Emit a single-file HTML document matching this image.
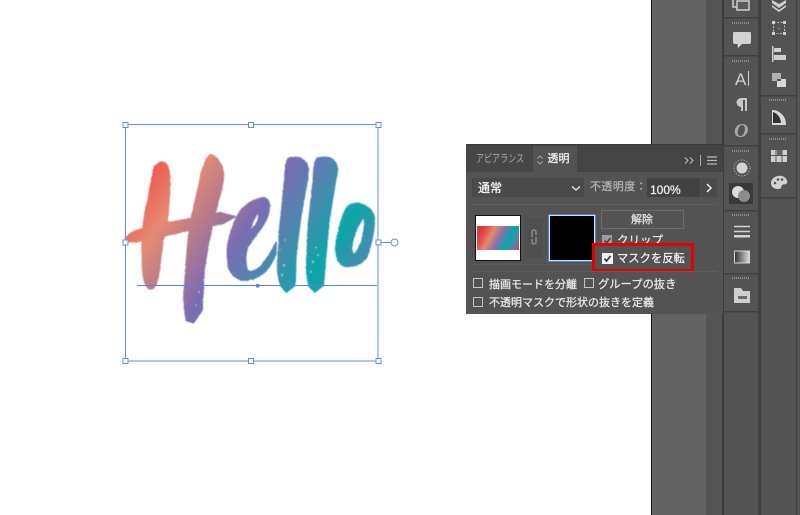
<!DOCTYPE html>
<html><head><meta charset="utf-8">
<style>
html,body{margin:0;padding:0;background:#fff}
#r{position:relative;width:800px;height:515px;overflow:hidden;background:#fff;font-family:"Liberation Sans","Noto Sans CJK JP",sans-serif}
.a{position:absolute}
.t{position:absolute;white-space:nowrap;color:#e9e9e9;font-size:11px;line-height:14px;-webkit-text-stroke:.25px currentColor}
.cb{position:absolute;width:8px;height:8px;border:1px solid #c4c4c4;box-sizing:content-box}
</style></head><body><div id="r">
<div class="a" style="left:651px;top:0;width:1px;height:515px;background:#1c1c1c"></div>
<div class="a" style="left:652px;top:0;width:54px;height:515px;background:#636363"></div>
<div class="a" style="left:706px;top:0;width:16px;height:515px;background:#555"></div>
<div class="a" style="left:722px;top:0;width:78px;height:515px;background:#535353"></div>
<div class="a" style="left:722px;top:0;width:2px;height:515px;background:#3d3d3d"></div>
<div class="a" style="left:758px;top:0;width:3px;height:515px;background:#414141"></div>
<div class="a" style="left:796px;top:0;width:1px;height:515px;background:#414141"></div>

<svg class="a" style="left:0;top:0" width="800" height="515" viewBox="0 0 800 515">
<defs>
<linearGradient id="g" gradientUnits="userSpaceOnUse" x1="155" y1="106" x2="745" y2="508">
<stop offset="0" stop-color="#ec5a4e"/><stop offset=".05" stop-color="#ea6455"/><stop offset=".18" stop-color="#e58a72"/><stop offset=".33" stop-color="#b47a8c"/><stop offset=".49" stop-color="#7b6cb2"/><stop offset=".69" stop-color="#3f8fae"/><stop offset=".83" stop-color="#0ba6a8"/><stop offset=".95" stop-color="#3f8fae"/>
</linearGradient>
<filter id="rough" x="-5%" y="-5%" width="110%" height="110%">
<feTurbulence type="fractalNoise" baseFrequency=".4" numOctaves="2" seed="4"/>
<feDisplacementMap in="SourceGraphic" scale="1.500" xChannelSelector="R" yChannelSelector="G"/>
<feGaussianBlur stdDeviation=".4"/>
</filter>
</defs>
<g filter="url(#rough)">
<g transform="translate(110 110) scale(.33333)" fill="url(#g)" stroke="url(#g)" stroke-width="5" stroke-linejoin="round" fill-rule="evenodd">
<path d="M150 157Q165 155 172 168Q180 190 179 220Q177 280 172 335L165 350Q158 400 152 440Q148 490 138 522Q125 545 112 532Q100 515 98 470Q95 400 101 340Q105 300 115 270Q125 200 135 170Z"/>
<path d="M47 385Q60 370 75 364L130 345L250 325L330 308L375 320L340 340L240 360L130 385L80 395L55 395Z"/>
<path d="M300 134Q318 138 328 155Q342 175 340 205Q335 240 325 270L310 335L295 400L282 480L276 600L250 638L230 630Q222 600 222 560L232 420Q238 350 250 300L275 190Q285 150 300 134Z"/>
<path d="M352 430Q352 400 362 370Q375 325 395 298Q425 268 462 263Q480 270 478 295Q474 325 455 352Q430 385 412 412Q402 450 412 482Q425 488 445 476Q470 455 498 398L497 430Q485 465 465 485Q435 512 395 510Q365 500 355 470ZM445 305Q428 325 420 362Q440 350 447 322Z"/>
<path d="M535 145Q550 140 570 144Q592 155 595 178L590 220L572 320L558 430L555 525L530 546L514 530Q503 500 503 470L510 350L525 200Q527 160 535 145Z"/>
<path d="M620 145Q640 140 660 144Q680 155 682 178L675 220L657 330L647 440L640 525L615 546L598 530Q590 500 590 470L595 350L610 210Q612 165 620 145Z"/>
<path d="M732 280Q755 280 772 292Q792 305 793 330Q792 375 772 438Q755 465 722 468Q695 475 682 445Q672 410 685 370Q695 320 710 295Q720 283 732 280ZM762 322Q740 345 727 395Q720 430 733 433Q748 420 757 385Q768 340 762 322Z"/>
</g>
<g fill="#fff" opacity=".75">
<circle cx="284" cy="265" r=".8"/><circle cx="280" cy="250" r=".7"/><circle cx="285" cy="240" r=".6"/><circle cx="282" cy="275" r=".7"/><circle cx="313" cy="262" r=".8"/><circle cx="316" cy="248" r=".7"/><circle cx="311" cy="272" r=".7"/><circle cx="318" cy="255" r=".6"/>
<circle cx="204" cy="280" r=".7"/><circle cx="199" cy="292" r=".7"/><circle cx="203" cy="300" r=".7"/><circle cx="196" cy="305" r=".6"/>
</g>
</g>
<rect x="137" y="285" width="240" height="1" fill="#4f80f5"/>
<g fill="none" stroke="#5f8cf5" stroke-width="1">
<rect x="125.500" y="124.500" width="252.500" height="236.500"/>
<path d="M378 242.500H391"/>
<circle cx="394.500" cy="242.500" r="3.500" fill="#fff"/>
<g fill="#fff">
<rect x="123" y="122.500" width="5" height="5"/><rect x="248.500" y="122.500" width="5" height="5"/><rect x="376" y="122.500" width="5" height="5"/>
<rect x="123" y="240" width="5" height="5"/><rect x="376" y="240" width="5" height="5"/>
<rect x="123" y="358.500" width="5" height="5"/><rect x="248.500" y="358.500" width="5" height="5"/><rect x="376" y="358.500" width="5" height="5"/>
</g></g>
<rect x="256" y="284" width="3.500" height="3.500" fill="#5b86f0"/>

<g fill="#3f3f3f">
<rect x="724" y="17" width="34" height="1.500"/><rect x="724" y="55" width="34" height="1.500"/><rect x="724" y="145" width="34" height="1.500"/><rect x="724" y="210" width="34" height="1.500"/><rect x="724" y="273" width="34" height="1.500"/><rect x="724" y="311" width="34" height="1.500"/>
<rect x="761" y="95" width="35" height="1.500"/><rect x="761" y="133" width="35" height="1.500"/><rect x="761" y="197" width="35" height="1.500"/>
</g>
<g stroke="#8c8c8c" stroke-width="2" stroke-dasharray="1 1">
<path d="M732 23H750M732 61H750M732 151H750M732 215H750M732 278H750M769 100H787M769 139H787"/>
</g>

<!-- col1 icons -->
<path d="M733 0V7H737M737 1H749V10H737Z" fill="#5a5a5a" stroke="#cfcfcf" stroke-width="1.500"/>
<path d="M734 32H750Q751 32 751 34V42Q751 44 749 44H742L738 48L737.500 44H735Q733 44 733 42V34Q733 32 734 32Z" fill="#d2d2d2"/>
<text x="735" y="85" font-family="Liberation Sans" font-size="17" fill="#d0d0d0">A</text>
<rect x="748" y="71" width="1" height="15" fill="#d0d0d0"/>
<path d="M745 98H741A4.500 4.500 0 0 0 741 107V111H743V100H745V111H747V98Z" fill="#c8c8c8"/>
<text x="734" y="137" font-family="Liberation Serif" font-style="italic" font-weight="bold" font-size="20" fill="#a8a8a8">O</text>
<circle cx="742" cy="168" r="5.500" fill="#d4d4d4"/><circle cx="742" cy="168" r="8" fill="none" stroke="#a8a8a8" stroke-dasharray="1.500 1.500"/>
<rect x="729" y="183" width="24" height="21" fill="#393939"/>
<circle cx="738" cy="192" r="6" fill="#dcdcdc"/><circle cx="744" cy="196" r="6" fill="#8c8c8c"/>
<path d="M734 226.500H750M734 231.500H750" stroke="#d4d4d4" stroke-width="1.500"/><rect x="734" y="235" width="16" height="2.500" fill="#d4d4d4"/>
<linearGradient id="g2"><stop offset="0" stop-color="#333"/><stop offset="1" stop-color="#ddd"/></linearGradient>
<rect x="734.500" y="251" width="15" height="12" fill="url(#g2)" stroke="#d4d4d4"/>
<path d="M734 288H741L743 291H750V303H734Z" fill="#cfcfcf"/><rect x="738" y="296" width="9" height="3" fill="#6b6b6b"/>

<!-- col2 icons -->
<path d="M772 0L779 4L786 0V3L779 8L772 3ZM772 5L779 10L786 5V7L779 12L772 7Z" fill="#d0d0d0"/>
<rect x="773.500" y="22.500" width="11" height="11" fill="none" stroke="#bbb" stroke-dasharray="2 1.500"/>
<path d="M772 21h3v3h-3zM783 21h3v3h-3zM772 32h3v3h-3zM783 32h3v3h-3z" fill="#d0d0d0"/><rect x="778.500" y="28" width="1" height="1" fill="#ccc"/>
<rect x="772" y="46" width="1.500" height="16" fill="#d0d0d0"/><rect x="774" y="48" width="7" height="4" fill="#d0d0d0"/><rect x="774" y="55" width="12" height="5" fill="#d0d0d0"/>
<rect x="772" y="73" width="9" height="8" fill="#b0b0b0"/><rect x="777" y="79" width="9" height="8" fill="#d8d8d8"/><rect x="777" y="79" width="4" height="2" fill="#555"/>
<path d="M772 110H773A14 14 0 0 1 786 124V125H772Z" fill="#d8d8d8"/><path d="M773 112A12 12 0 0 1 781 123H773Z" fill="#333"/>
<g fill="#cfcfcf"><rect x="771" y="150" width="16" height="12"/></g><path d="M771 155.500H787M776 150V162M782 150V162" stroke="#555"/><rect x="777" y="150" width="5" height="5" fill="#666"/>
<path d="M771 183C771 178 777 175 782 176C786 177 788 181 787 183C786 185 783 184 782 185C781 187 782 189 778 189C774 189 771 187 771 183Z" fill="#d2d2d2"/>
<circle cx="775" cy="183" r="1.300" fill="#555"/><circle cx="778" cy="179.500" r="1.300" fill="#555"/><circle cx="782" cy="179.500" r="1.300" fill="#555"/>
</svg>

<!-- panel -->
<div class="a" style="left:466px;top:144px;width:257px;height:169px;background:#535353;border-top:1px solid #3a3a3a"></div>
<div class="a" style="left:466px;top:145px;width:257px;height:27px;background:#444"></div>
<div class="a" style="left:467px;top:146px;width:65px;height:26px;background:#474747"></div>
<div class="a" style="left:533px;top:146px;width:44px;height:26px;background:#535353"></div>
<div class="t" style="left:476px;top:152px;font-size:11px;color:#a8a8a8;transform:scaleX(.73);transform-origin:0 0;-webkit-text-stroke:0">アピアランス</div>
<svg class="a" style="left:536px;top:154px" width="8" height="12"><path d="M1.500 4.500L4 2L6.500 4.500M1.500 7.500L4 10L6.500 7.500" fill="none" stroke="#a5a5a5"/></svg>
<div class="t" style="left:547.500px;top:152px;color:#f0f0f0">透明</div>
<svg class="a" style="left:684px;top:154px" width="36" height="14"><path d="M1 3.500L4 6.500L1 9.500M6 3.500L9 6.500L6 9.500" fill="none" stroke="#c4c4c4"/><path d="M16.500 1V12" stroke="#aaa"/><path d="M23 3H33M23 6.500H33M23 10H33" stroke="#b8b8b8" stroke-width="1.200"/></svg>

<div class="a" style="left:472px;top:178px;width:112px;height:19px;background:#4a4a4a"></div>
<div class="t" style="left:478px;top:181px;font-size:12px;color:#f4f4f4">通常</div>
<svg class="a" style="left:571px;top:185px" width="10" height="7"><path d="M1 1.500L5 5L9 1.500" fill="none" stroke="#e4e4e4" stroke-width="1.400"/></svg>
<div class="t" style="left:590px;top:180px;color:#b4b4b4;letter-spacing:.4px">不透明度：</div>
<div class="a" style="left:647px;top:178px;width:53px;height:19px;background:#424242"></div>
<div class="a" style="left:701px;top:178px;width:16px;height:19px;background:#4a4a4a"></div>
<div class="t" style="left:650px;top:183px;font-size:12px;color:#f0f0f0">100%</div>
<svg class="a" style="left:705px;top:183px" width="8" height="10"><path d="M2 1L6 5L2 9" fill="none" stroke="#f0f0f0" stroke-width="1.500"/></svg>
<div class="a" style="left:472px;top:204px;width:245px;height:1px;background:#5d5d5d"></div>

<div class="a" style="left:472px;top:212px;width:122px;height:52px;border-bottom:1px solid #5a5a5a"></div>
<div class="a" style="left:475px;top:215px;width:44px;height:44px;background:#fff;border:1px solid #111"></div>
<div class="a" style="left:477px;top:226px;width:42px;height:24px;background:linear-gradient(118deg,#dc2b35 0%,#e3444a 18%,#e58a72 35%,#8a6fae 52%,#0ba6a8 70%,#3f8fae 82%,#c04a6a 100%)"></div>
<div class="a" style="left:525px;top:218px;width:18px;height:40px;background:#4f4f4f"></div>
<svg class="a" style="left:529px;top:228px" width="10" height="18"><path d="M3 9V4A2 2 0 0 1 7 4V7M7 9V14A2 2 0 0 1 3 14V11" fill="none" stroke="#8a8a8a" stroke-width="1.500"/></svg>
<div class="a" style="left:548px;top:214px;width:46px;height:46px;background:#000;border:1px solid #3f8fe0;box-shadow:inset 0 0 0 1px #ddd"></div>
<div class="a" style="left:601px;top:210px;width:81px;height:17px;border:1px solid #6c6c6c;background:#535353"></div>
<div class="t" style="left:631px;top:213px;color:#e4e4e4">解除</div>
<div class="cb" style="left:602px;top:235px;background:#9c9c9c;border-color:#9c9c9c"></div>
<svg class="a" style="left:603px;top:236px" width="9" height="9"><path d="M1.500 4.500L3.500 7L7.500 2" fill="none" stroke="#444" stroke-width="1.600"/></svg>
<div class="t" style="left:617px;top:234px;font-size:11.500px">クリップ</div>

<div class="a" style="left:592px;top:243px;width:96px;height:23px;border:3px solid #e60000;background:#535353"></div>
<div class="a" style="left:602px;top:253px;width:11px;height:11px;background:#f0f0f0"></div>
<svg class="a" style="left:603px;top:254px" width="9" height="9"><path d="M1.500 4.500L3.500 7L7.500 2" fill="none" stroke="#333" stroke-width="1.700"/></svg>
<div class="t" style="left:617px;top:252px;color:#f0f0f0;font-size:11.300px">マスクを反転</div>
<div class="a" style="left:472px;top:271px;width:245px;height:1px;background:#5d5d5d"></div>

<div class="cb" style="left:473px;top:278px"></div>
<div class="t" style="left:489px;top:278px">描画モードを分離</div>
<div class="cb" style="left:584px;top:278px"></div>
<div class="t" style="left:598px;top:278px;font-size:11.300px">グループの抜き</div>
<div class="cb" style="left:473px;top:297px"></div>
<div class="t" style="left:489px;top:296px">不透明マスクで形状の抜きを定義</div>
</div></body></html>
